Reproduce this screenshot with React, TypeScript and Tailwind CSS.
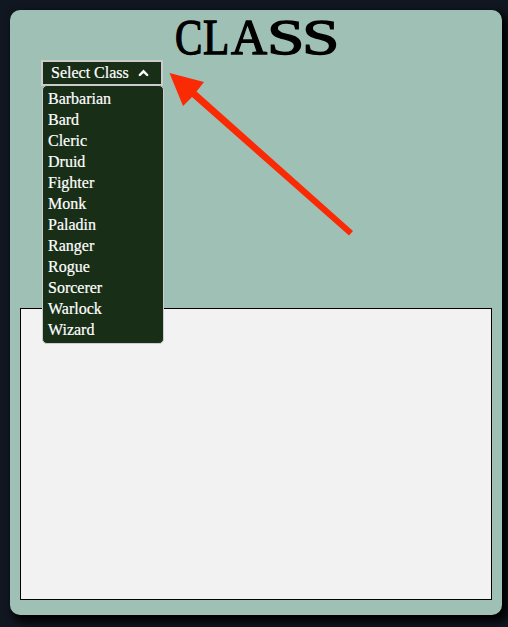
const classes = ['Barbarian', 'Bard', 'Cleric', 'Druid', 'Fighter', 'Monk', 'Paladin', 'Ranger', 'Rogue', 'Sorcerer', 'Warlock', 'Wizard'];

function ClassSelect() {
  return (
    <div className="relative ml-[31px] w-[122px]">
      <button className="flex h-[26px] w-full items-center border-2 border-[#cccccc] bg-[#182e17] pl-2 text-base leading-none text-white [-webkit-text-stroke:0.2px_white]">
        <span>Select Class</span>
        <svg className="ml-[9px]" width="11" height="8" viewBox="0 0 11 8" fill="none" stroke="white" strokeWidth="2.4" strokeLinecap="round">
          <path d="M1.8 6 5.5 2.3 9.2 6" />
        </svg>
      </button>
      <ul className="absolute top-[25px] left-px h-[259px] w-[122px] rounded-[5px] border border-[#cccccc] bg-[#182e17] pt-[2px] pl-[5px] text-base leading-[21px] text-white [-webkit-text-stroke:0.2px_white]">
        {classes.map((name) => (
          <li key={name}>{name}</li>
        ))}
      </ul>
    </div>
  );
}

export default function App() {
  return (
    <div className="h-[627px] w-[508px] overflow-hidden bg-[#111721] pt-[10px] pl-[10px] font-['Liberation_Serif',serif]">
      <main className="flex h-[605px] w-[492px] flex-col rounded-[10px] bg-[#9fc1b5] shadow-[5px_5px_10px_2px_#000000]">
        <h1 className="flex h-[50px] shrink-0 pl-[165px] text-[50px] leading-[54px] text-black [-webkit-text-stroke:1.3px_black]">
          <span className="w-[28px] origin-left scale-x-[0.82]">C</span>
          <span className="w-[28px] origin-left scale-x-[0.86]">L</span>
          <span className="w-[36px] origin-left">A</span>
          <span className="w-[35px] origin-left scale-x-[1.35]">S</span>
          <span className="w-[35px] origin-left scale-x-[1.35]">S</span>
        </h1>
        <ClassSelect />
        <section className="mx-[10px] mt-[222px] h-[292px] shrink-0 border border-black bg-[#f2f2f2]" />
      </main>
      <svg className="pointer-events-none absolute top-0 left-0" width="508" height="627" fill="#fa2a05">
        <path d="M169.5 73 204 82 196.5 91.5 353 231 349 235.5 192 97 183 106Z" />
      </svg>
    </div>
  );
}
